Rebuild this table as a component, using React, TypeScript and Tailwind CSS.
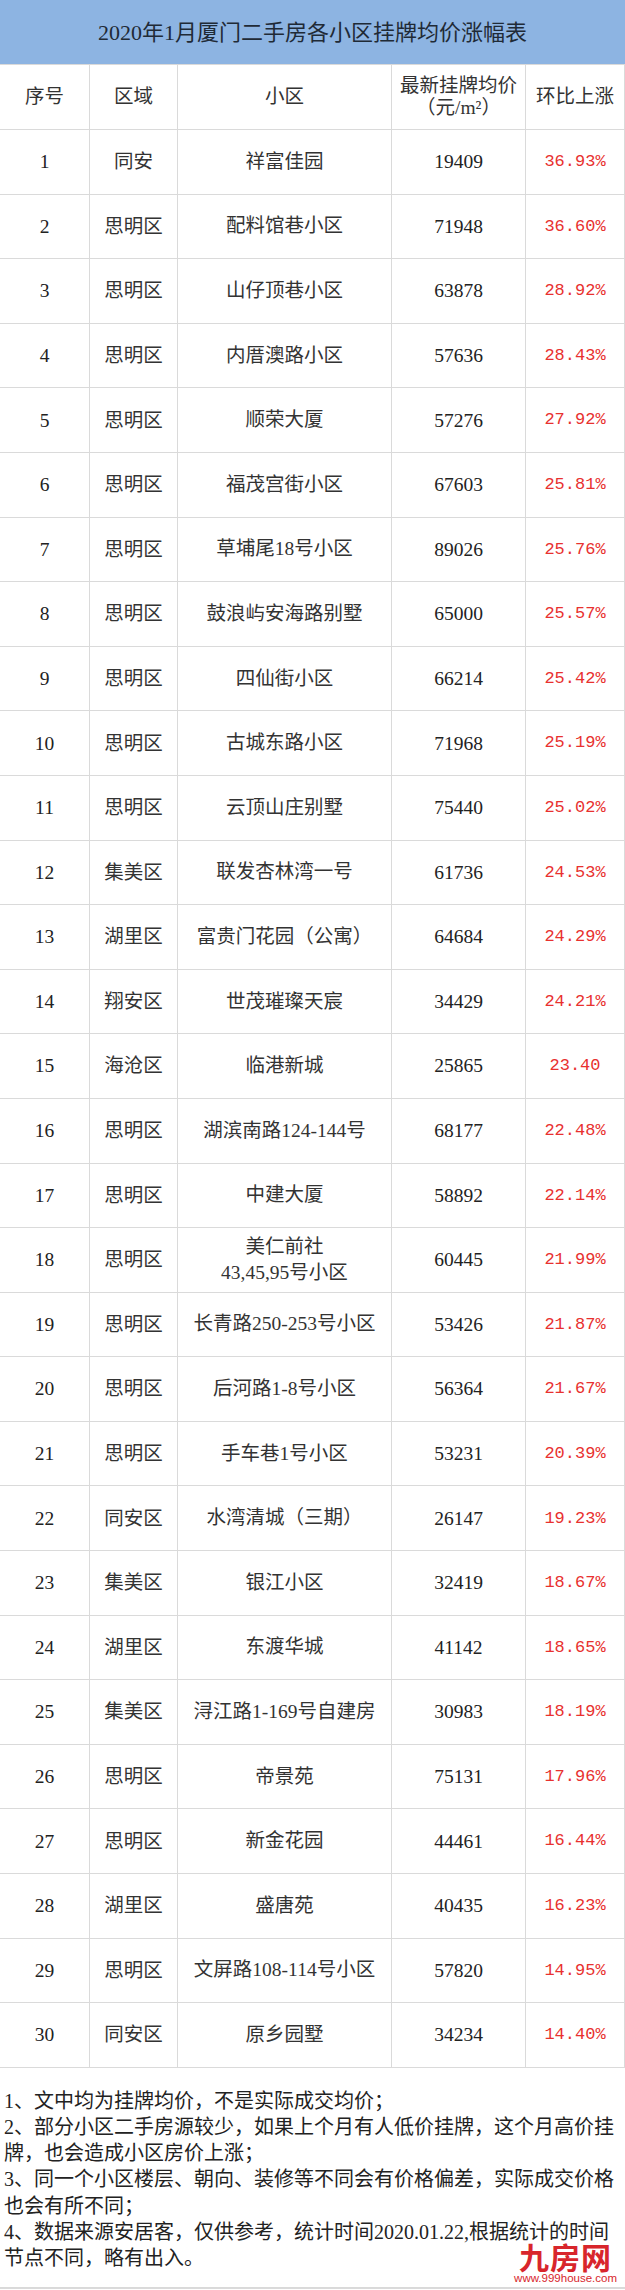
import React from "react";

type Row = [string, string, string, string, string];

const rows: Row[] = [
  ["1", "同安", "祥富佳园", "19409", "36.93%"],
  ["2", "思明区", "配料馆巷小区", "71948", "36.60%"],
  ["3", "思明区", "山仔顶巷小区", "63878", "28.92%"],
  ["4", "思明区", "内厝澳路小区", "57636", "28.43%"],
  ["5", "思明区", "顺荣大厦", "57276", "27.92%"],
  ["6", "思明区", "福茂宫街小区", "67603", "25.81%"],
  ["7", "思明区", "草埔尾18号小区", "89026", "25.76%"],
  ["8", "思明区", "鼓浪屿安海路别墅", "65000", "25.57%"],
  ["9", "思明区", "四仙街小区", "66214", "25.42%"],
  ["10", "思明区", "古城东路小区", "71968", "25.19%"],
  ["11", "思明区", "云顶山庄别墅", "75440", "25.02%"],
  ["12", "集美区", "联发杏林湾一号", "61736", "24.53%"],
  ["13", "湖里区", "富贵门花园（公寓）", "64684", "24.29%"],
  ["14", "翔安区", "世茂璀璨天宸", "34429", "24.21%"],
  ["15", "海沧区", "临港新城", "25865", "23.40"],
  ["16", "思明区", "湖滨南路124-144号", "68177", "22.48%"],
  ["17", "思明区", "中建大厦", "58892", "22.14%"],
  ["18", "思明区", "美仁前社\n43,45,95号小区", "60445", "21.99%"],
  ["19", "思明区", "长青路250-253号小区", "53426", "21.87%"],
  ["20", "思明区", "后河路1-8号小区", "56364", "21.67%"],
  ["21", "思明区", "手车巷1号小区", "53231", "20.39%"],
  ["22", "同安区", "水湾清城（三期）", "26147", "19.23%"],
  ["23", "集美区", "银江小区", "32419", "18.67%"],
  ["24", "湖里区", "东渡华城", "41142", "18.65%"],
  ["25", "集美区", "浔江路1-169号自建房", "30983", "18.19%"],
  ["26", "思明区", "帝景苑", "75131", "17.96%"],
  ["27", "思明区", "新金花园", "44461", "16.44%"],
  ["28", "湖里区", "盛唐苑", "40435", "16.23%"],
  ["29", "思明区", "文屏路108-114号小区", "57820", "14.95%"],
  ["30", "同安区", "原乡园墅", "34234", "14.40%"],
];

const cols = "grid grid-cols-[90px_88px_214px_134px_99px]";
const cell =
  "flex items-center justify-center text-center border-r border-b border-[#dadada]";
const serif = "font-['Liberation_Serif','Noto_Sans_CJK_SC',serif]";

export default function App() {
  return (
    <div className={`w-[625px] h-[2290px] bg-white text-[#333] ${serif}`}>
      {/* Title */}
      <div className="h-[65px] bg-[#8db4e2] flex items-center justify-center text-[22px] text-[#1f2a36] border-b border-[#dadada]">
        2020年1月厦门二手房各小区挂牌均价涨幅表
      </div>

      {/* Column headers */}
      <div className={`${cols} h-[65px] text-[19.5px]`}>
        <div className={cell}>序号</div>
        <div className={cell}>区域</div>
        <div className={cell}>小区</div>
        <div className={`${cell} flex-col leading-[22px]`}>
          <span>最新挂牌均价</span>
          <span>（元/m²）</span>
        </div>
        <div className={cell}>环比上涨</div>
      </div>

      {/* Rows */}
      {rows.map(([no, area, name, price, pct]) => (
        <div key={no} className={`${cols} h-[64.6px] text-[19.5px]`}>
          <div className={`${cell} text-[#222]`}>{no}</div>
          <div className={cell}>{area}</div>
          <div className={`${cell} whitespace-pre-line leading-[26px]`}>{name}</div>
          <div className={`${cell} text-[#222]`}>{price}</div>
          <div className={`${cell} text-[17px] text-[#e8312f] font-['Liberation_Mono',monospace]`}>
            {pct}
          </div>
        </div>
      ))}

      {/* Notes */}
      <div className="relative h-[221px] pt-[20px] pl-[4px] text-[20px] leading-[26.2px] text-[#222] border-b-2 border-[#dadada] whitespace-nowrap">
        <div>1、文中均为挂牌均价，不是实际成交均价；</div>
        <div>2、部分小区二手房源较少，如果上个月有人低价挂牌，这个月高价挂</div>
        <div>牌，也会造成小区房价上涨；</div>
        <div>3、同一个小区楼层、朝向、装修等不同会有价格偏差，实际成交价格</div>
        <div>也会有所不同；</div>
        <div>4、数据来源安居客，仅供参考，统计时间2020.01.22,根据统计的时间</div>
        <div>节点不同，略有出入。</div>

        {/* watermark */}
        <div className="absolute right-[8px] bottom-[2px] flex flex-col items-center text-[#d8262c]">
          <span className="text-[30px] leading-[30px] font-bold tracking-[1px] font-['Noto_Sans_CJK_SC',sans-serif]">
            九房网
          </span>
          <span className="text-[11.5px] leading-[14px] font-['Liberation_Sans',sans-serif]">
            www.999house.com
          </span>
        </div>
      </div>
    </div>
  );
}
